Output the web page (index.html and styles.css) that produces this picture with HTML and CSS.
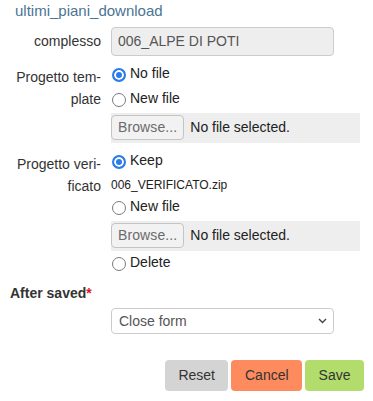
FILE: index.html
```html
<!DOCTYPE html>
<html lang="it">
<head>
<meta charset="utf-8">
<title>ultimi_piani_download</title>
<link rel="stylesheet" href="styles.css">
</head>
<body>
<div class="page">
  <h1 class="title">ultimi_piani_download</h1>

  <div class="row row-complesso">
    <div class="label">complesso</div>
    <div class="field">
      <div class="text-input">006_ALPE DI POTI</div>
    </div>
  </div>

  <div class="row row-group">
    <div class="label">Progetto tem&shy;plate</div>
    <div class="field">
      <label class="option"><span class="radio checked"></span><span>No file</span></label>
      <label class="option option-next"><span class="radio"></span><span>New file</span></label>
      <div class="file-row"><span class="browse">Browse...</span><span class="file-status">No file selected.</span></div>
    </div>
  </div>

  <div class="row row-group">
    <div class="label">Progetto veri&shy;ficato</div>
    <div class="field">
      <label class="option"><span class="radio checked"></span><span>Keep</span></label>
      <div class="filename">006_VERIFICATO.zip</div>
      <label class="option option-after-file"><span class="radio"></span><span>New file</span></label>
      <div class="file-row"><span class="browse">Browse...</span><span class="file-status">No file selected.</span></div>
      <label class="option option-delete"><span class="radio"></span><span>Delete</span></label>
    </div>
  </div>

  <div class="after-saved">After saved<span class="required">*</span></div>

  <div class="select-row">
    <div class="select">
      <span>Close form</span>
      <svg class="chevron" width="9" height="6" viewBox="0 0 9 6"><path d="M1 1 L4.5 4.5 L8 1" fill="none" stroke="#444" stroke-width="1.4"/></svg>
    </div>
  </div>

  <div class="actions">
    <button class="btn btn-reset">Reset</button>
    <button class="btn btn-cancel">Cancel</button>
    <button class="btn btn-save">Save</button>
  </div>
</div>
</body>
</html>
```

FILE: styles.css
```css
html, body {
  margin: 0;
  background: #fff;
}

body {
  font-family: "Liberation Sans", Arial, sans-serif;
  font-size: 14px;
  color: #333;
}

.page {
  width: 373px;
  box-sizing: border-box;
  padding: 1px 0 0 10px;
}

.title {
  margin: 0 0 6px 5px;
  font-size: 15px;
  line-height: 20px;
  font-weight: normal;
  color: #4a7594;
}

.row {
  display: flex;
  gap: 10px;
}

.row-group {
  margin-top: 7px;
}

.label {
  width: 91px;
  text-align: right;
  padding-top: 3px;
  line-height: 22px;
  color: #333;
}

.field {
  width: 249px;
  display: flex;
  flex-direction: column;
  align-items: flex-start;
}

.text-input {
  width: 223px;
  height: 29px;
  box-sizing: border-box;
  border: 1px solid #ccc;
  border-radius: 4px;
  background: #eee;
  padding: 0 6px;
  line-height: 27px;
  color: #555;
}

.option {
  display: flex;
  align-items: flex-start;
  height: 20px;
  line-height: 20px;
  color: #222;
}

.option-next {
  margin-top: 5px;
}

.option-after-file {
  margin-top: 2px;
}

.option-delete {
  margin-top: 1px;
}

.radio {
  width: 14px;
  height: 14px;
  box-sizing: border-box;
  margin: 5px 4px 0 1px;
  border-radius: 50%;
  border: 1px solid #7a7a7a;
  background: #fff;
  flex: none;
}

.radio.checked {
  border: 2px solid #2b7de9;
  background: #2b7de9;
  box-shadow: inset 0 0 0 2px #fff;
}

.file-row {
  margin-top: 5px;
  width: 249px;
  height: 30px;
  box-sizing: border-box;
  padding-top: 2px;
  background: #eee;
  display: flex;
  align-items: flex-start;
}

.browse {
  height: 25px;
  box-sizing: border-box;
  border: 1px solid #c4c4c4;
  border-radius: 4px;
  background: #f2f2f2;
  padding: 0 6px;
  line-height: 23px;
  color: #6b6b6b;
  letter-spacing: 0.1px;
}

.file-status {
  margin-left: 6px;
  line-height: 25px;
  color: #222;
}

.filename {
  margin-top: 6px;
  font-size: 12px;
  line-height: 18px;
  color: #222;
}

.after-saved {
  margin-top: 11px;
  line-height: 20px;
  font-weight: bold;
  color: #333;
}

.required {
  color: #e0161b;
}

.select-row {
  margin-top: 5px;
  padding-left: 101px;
}

.select {
  width: 223px;
  height: 26px;
  box-sizing: border-box;
  border: 1px solid #ccc;
  border-radius: 4px;
  background: #fff;
  padding: 0 6px 0 7px;
  line-height: 24px;
  color: #555;
  display: flex;
  align-items: center;
  justify-content: space-between;
}

.chevron {
  display: block;
}

.actions {
  margin-top: 26px;
  padding-right: 9px;
  display: flex;
  justify-content: flex-end;
  gap: 3px;
}

.btn {
  height: 31px;
  padding: 0 13.5px;
  border: none;
  border-radius: 4px;
  font-family: inherit;
  font-size: 14px;
  line-height: 31px;
  color: #333;
}

.btn-reset {
  background: #d4d4d4;
}

.btn-cancel {
  background: #fd8b5e;
}

.btn-save {
  background: #b2dc6b;
}
```
